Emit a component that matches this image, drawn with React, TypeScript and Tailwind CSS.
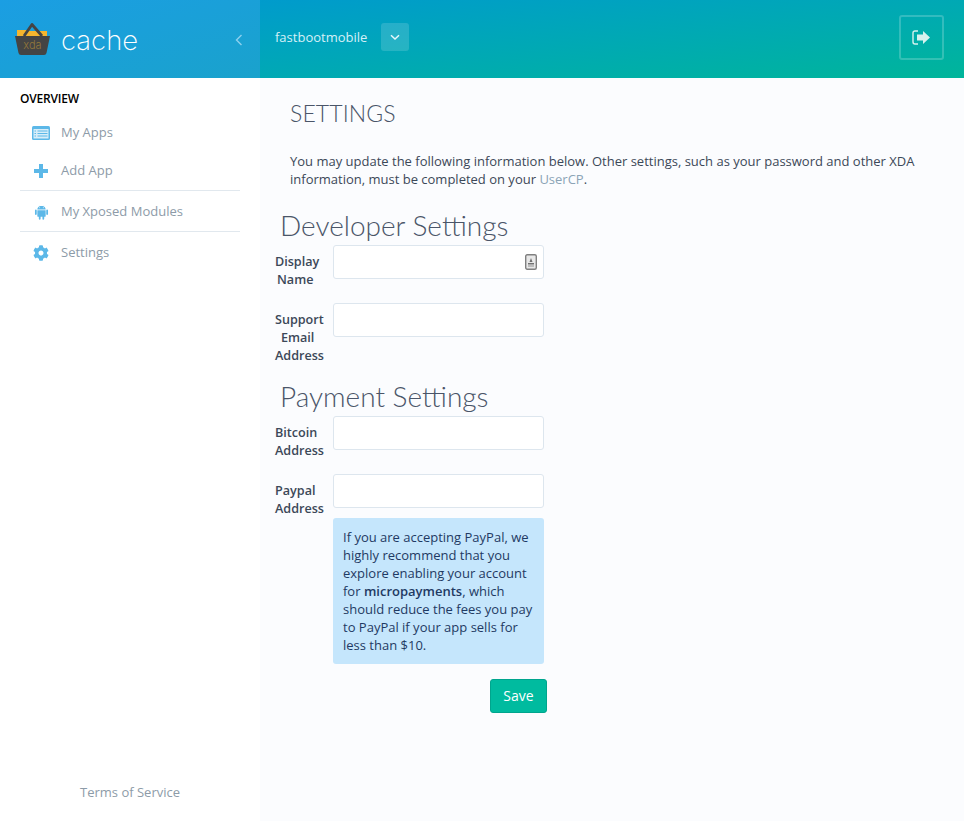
import { ReactNode } from 'react'
import { FaCog } from 'react-icons/fa'
import { IoLogoAndroid } from 'react-icons/io'

function ListIcon() {
  return (
    <svg width="18" height="14" viewBox="0 0 18 14">
      <rect x="0" y="0" width="18" height="14" rx="1.5" fill="#5cb8e8" />
      <rect x="1.5" y="3" width="15" height="9.5" fill="#d8eef9" />
      <path d="M2.5 5 H4 M5.5 5 H15.5 M2.5 7.5 H4 M5.5 7.5 H15.5 M2.5 10 H4 M5.5 10 H15.5" stroke="#5cb8e8" strokeWidth="1" />
    </svg>
  )
}

function PlusIcon() {
  return (
    <svg width="14" height="14" viewBox="0 0 14 14">
      <path d="M5 0 H9 V5 H14 V9 H9 V14 H5 V9 H0 V5 H5 Z" fill="#5cb8e8" />
    </svg>
  )
}

function NavItem({ icon, label }: { icon: ReactNode; label: string }) {
  return (
    <a className="flex h-[38px] items-center text-[13px] text-[#8d9ba8]">
      <span className="flex w-[41px] justify-center pl-[1px] text-[#5cb8e8]">{icon}</span>
      {label}
    </a>
  )
}

function Logo() {
  return (
    <svg width="36" height="36" viewBox="0 0 36 36" className="shrink-0">
      <path d="M2 9 L13 9 L15 10 L32 10 L32 16 L2 16 Z" fill="#f5b52e" />
      <path d="M9 15 L17 3.5 L27 15" fill="none" stroke="#444444" strokeWidth="2.8" strokeLinejoin="round" />
      <path d="M0 15 L35 15 L31.5 32 Q31 34 29 34 L6 34 Q4 34 3.5 32 Z" fill="#444444" />
      <text x="17.5" y="28" textAnchor="middle" fontSize="11" fontWeight="300" fill="#93773a" fontFamily="Inter, sans-serif">
        xda
      </text>
    </svg>
  )
}

function Field({ label, help, icon, className }: { label: ReactNode; help?: ReactNode; icon?: boolean; className?: string }) {
  return (
    <div className={`flex ${className ?? ''}`}>
      <label className="w-[63px] shrink-0 pt-[8px] pl-[5px] text-[12.6px] leading-[18px] font-semibold text-[#3c4858]">
        {label}
      </label>
      <div className="w-[211px]">
        <div className="relative h-[34px] rounded-[3px] border border-[#dde6ee] bg-white">
          {icon && (
            <svg width="12" height="16" viewBox="0 0 12 16" className="absolute top-[8px] right-[6px]">
              <rect x="0.7" y="0.7" width="10.6" height="14.6" rx="1.5" fill="#e8e8e8" stroke="#808080" strokeWidth="1.4" />
              <path d="M6 4 L7.5 8 H4.5 Z" fill="#707070" />
              <rect x="3" y="9" width="6" height="1.5" fill="#707070" />
              <rect x="3" y="11.5" width="6" height="1" fill="#909090" />
            </svg>
          )}
        </div>
        {help}
      </div>
    </div>
  )
}

export default function App() {
  return (
    <div className="flex h-screen flex-col overflow-hidden bg-[#fbfcfe] font-['Open_Sans',sans-serif] text-[13px] text-[#3c4858]">
      <header className="flex h-[78px] shrink-0">
        <div className="flex w-[260px] items-center bg-gradient-to-br from-[#1b9ee3] to-[#1aa2cc] pr-[17px] pl-[15px]">
          <Logo />
          <span className="mt-[4px] ml-[10px] font-['Inter',sans-serif] text-[27.5px] leading-none font-extralight text-white">
            cache
          </span>
          <svg width="8" height="12" viewBox="0 0 8 12" className="mt-[1px] ml-auto">
            <path d="M6.5 1 L1.5 6 L6.5 11" fill="none" stroke="#8dd0ee" strokeWidth="1.4" />
          </svg>
        </div>
        <div className="flex flex-1 items-center bg-gradient-to-br from-[#009bcc] to-[#00b59a] pr-[20px] pb-[4px] pl-[15px]">
          <span className="pt-[2px] text-[13px] text-[#d5f0f7]">fastbootmobile</span>
          <button className="ml-[14px] flex h-[28px] w-[28px] items-center justify-center rounded-[3px] bg-white/15">
            <svg width="10" height="7" viewBox="0 0 10 7">
              <path d="M1 1.2 L5 5 L9 1.2" fill="none" stroke="#e6f7fb" strokeWidth="1.5" />
            </svg>
          </button>
          <button className="ml-auto flex h-[45px] w-[45px] items-center justify-center rounded-[3px] border-2 border-white/20">
            <svg width="19" height="15" viewBox="0 0 19 15" className="mt-[1px]">
              <path d="M6 1 H3 Q1 1 1 3 V12 Q1 14 3 14 H6" fill="none" stroke="#d6f2ee" strokeWidth="1.4" />
              <path d="M5 4.5 H11 V1 L18 7.5 L11 14 V10.5 H5 Z" fill="#d6f2ee" />
            </svg>
          </button>
        </div>
      </header>

      <div className="flex flex-1">
        <aside className="flex w-[260px] shrink-0 flex-col bg-white px-[20px]">
          <h3 className="mt-[12px] mb-[6px] text-[12px] leading-[18px] font-semibold tracking-[-0.2px] text-black">OVERVIEW</h3>
          <NavItem icon={<ListIcon />} label="My Apps" />
          <NavItem icon={<PlusIcon />} label="Add App" />
          <div className="mb-[2px] border-t border-[#e1e8ee]" />
          <NavItem icon={<IoLogoAndroid size={19} />} label="My Xposed Modules" />
          <div className="mb-[2px] border-t border-[#e1e8ee]" />
          <NavItem icon={<FaCog size={16} />} label="Settings" />
          <a className="mt-auto mb-[20px] text-center text-[13px] leading-[18px] text-[#8d9ba8]">Terms of Service</a>
        </aside>

        <main className="flex-1 pl-[10px]">
          <div className="pt-[20px] pl-[20px]">
            <h1 className="font-['Lato',sans-serif] text-[23px] leading-[30px] font-light tracking-[0.1px] text-[#4a5568]">SETTINGS</h1>
            <p className="mt-[24px] w-[640px] leading-[18px]">
              You may update the following information below. Other settings, such as your password and other XDA
              information, must be completed on your <a className="text-[#8ba4b6]">UserCP</a>.
            </p>
          </div>

          <h2 className="mt-[20px] h-[37px] pl-[10px] font-['Lato',sans-serif] text-[28px] leading-[35px] font-light text-[#4a5568]">
            Developer Settings
          </h2>
          <Field icon label={<>Display <span className="block pl-[2px]">Name</span></>} />
          <Field className="mt-[14px]" label={<>Support <span className="block pl-[6px]">Email</span> Address</>} />

          <h2 className="mt-[14px] h-[37px] pl-[10px] font-['Lato',sans-serif] text-[28px] leading-[35px] font-light text-[#4a5568]">
            Payment Settings
          </h2>
          <Field label={<>Bitcoin Address</>} />
          <Field
            className="mt-[14px]"
            label={<>Paypal Address</>}
            help={
              <div className="mt-[10px] rounded-[3px] bg-[#c5e6fc] px-[10px] py-[10px] leading-[18px] text-[#1f3a63]">
                If you are accepting PayPal, we highly recommend that you explore enabling your account for{' '}
                <b className="font-semibold">micropayments</b>, which should reduce the fees you pay to PayPal if your
                app sells for less than $10.
              </div>
            }
          />
          <div className="mt-[15px] flex w-[277px] justify-end">
            <button className="h-[34px] w-[57px] rounded-[3px] border border-[#00a58d] bg-[#00bb9f] pb-[2px] text-[14px] text-white">
              Save
            </button>
          </div>
        </main>
      </div>
    </div>
  )
}
